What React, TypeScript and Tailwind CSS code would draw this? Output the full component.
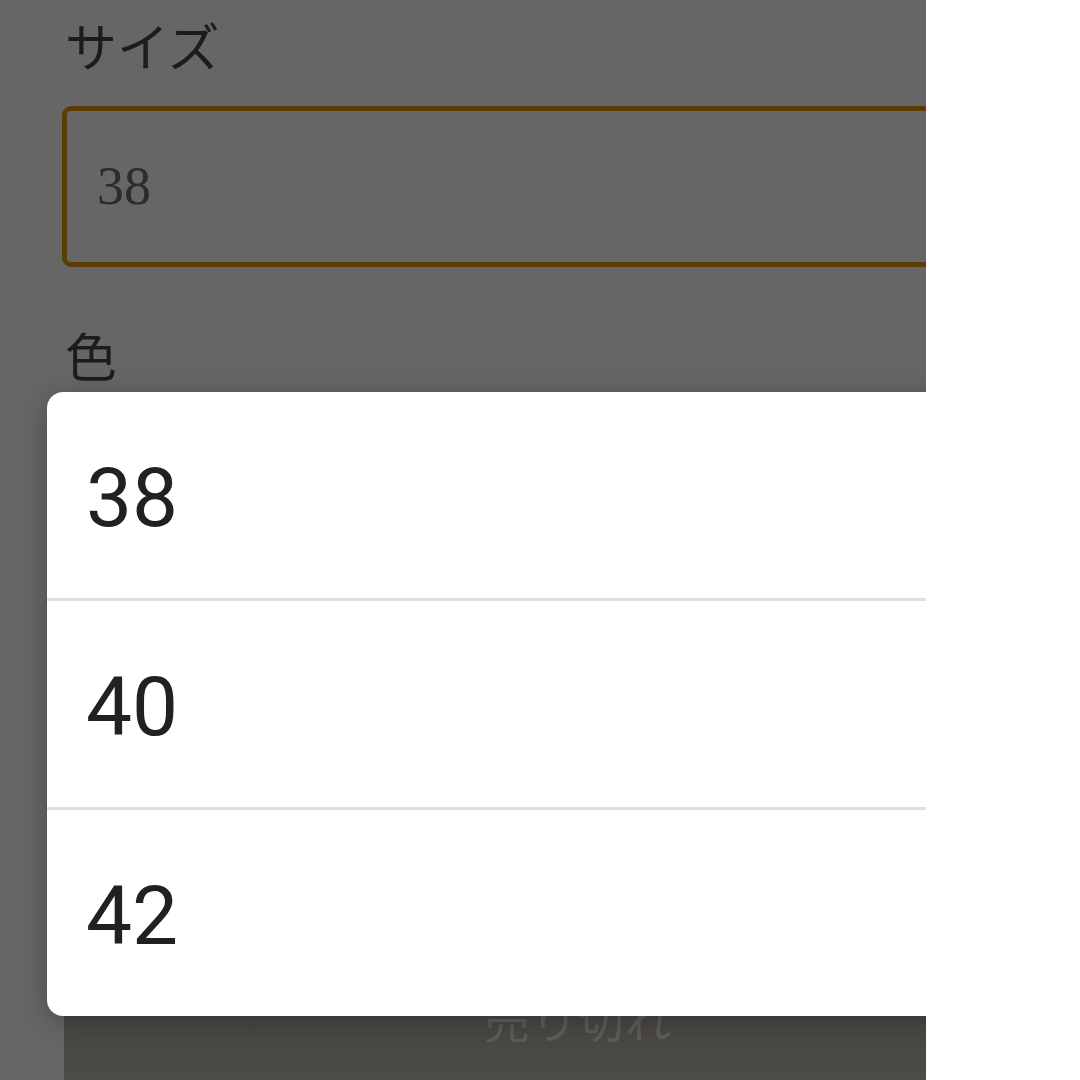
import React from "react";

const OPTIONS = ["38", "40", "42"];

export default function App() {
  return (
    <div className="relative w-[1080px] h-[1080px] bg-white overflow-hidden">
      <div className="relative w-[926px] h-full bg-[#666666] overflow-hidden font-['Noto_Sans_CJK_JP',sans-serif]">
        <div className="pl-[62px] pt-[15px]">
          <div className="text-[52px] leading-[60px] text-[#1c1c1c] pl-[3px]">サイズ</div>
          <div className="mt-[31px] w-[1000px] h-[161px] border-[5px] border-[#5a3c04] rounded-[9px] flex items-center pl-[30px]">
            <span className="font-['Liberation_Serif',serif] text-[54px] text-[#2e2b28]">38</span>
          </div>
          <div className="mt-[58px] text-[52px] leading-[60px] text-[#1c1c1c] pl-[3px]">色</div>
          <div className="mt-[565px] ml-[2px] w-[1028px] h-[160px] bg-gradient-to-b from-[#45433e] to-[#4f4d49] flex items-start justify-center pt-[40px]">
            <span className="text-[46px] leading-[56px] text-[#5e5d59] tracking-[1px]">売り切れ</span>
          </div>
        </div>

        <div className="absolute left-[47px] top-[392px] w-[1000px] bg-white rounded-[16px] shadow-[0_6px_30px_rgba(0,0,0,0.25)] overflow-hidden">
          {OPTIONS.map((o, i) => (
            <div key={o}>
              {i > 0 && <div className="h-[3px] bg-[#e0e0e0]" />}
              <div className="h-[206px] flex items-center pl-[39px] pt-[6px] font-['Roboto',sans-serif] text-[82px] text-[#212121]">
                {o}
              </div>
            </div>
          ))}
        </div>
      </div>
    </div>
  );
}
